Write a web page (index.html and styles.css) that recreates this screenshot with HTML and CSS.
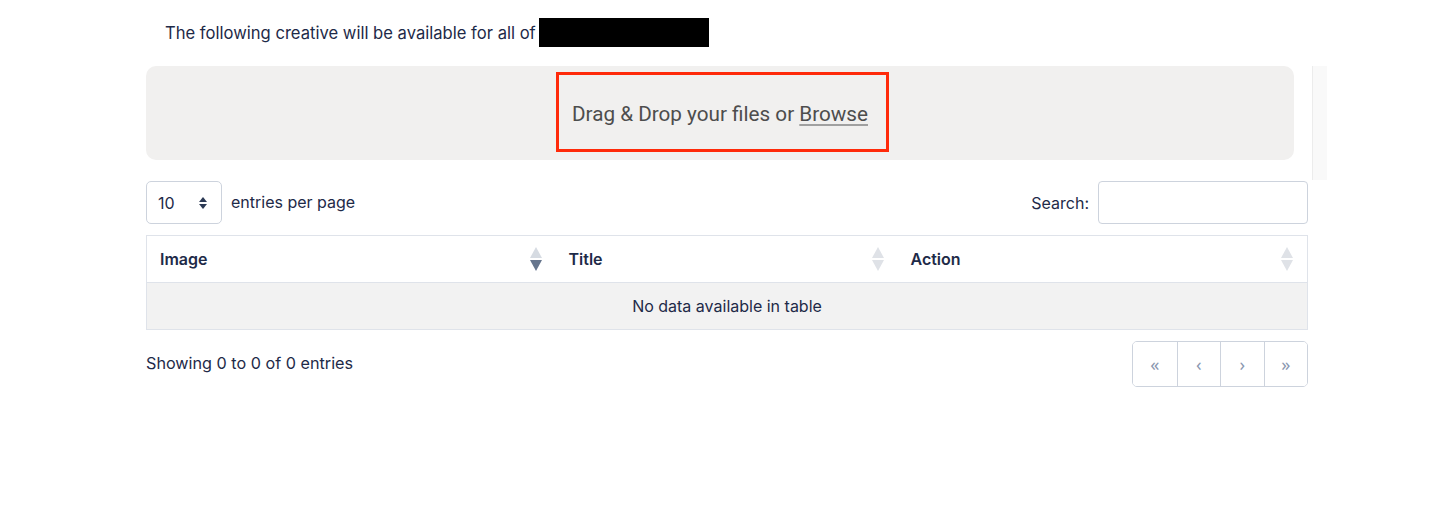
FILE: index.html
```html
<!DOCTYPE html>
<html lang="en">

<head>
    <meta charset="UTF-8">
    <meta name="viewport" content="width=device-width, initial-scale=1.0">
    <title>Creatives</title>
    <link rel="stylesheet" href="styles.css">
</head>

<body>

    <section class="page">
        <p class="intro">The following creative will be available for all of <span class="hidden-name"></span></p>

        <div class="upload">
            <div class="dropzone">
                <span class="drop-text">Drag &amp; Drop your files or <u>Browse</u></span>
                <div class="mark"></div>
            </div>
            <div class="strip"></div>
        </div>

        <div class="controls">
            <div class="perpage">
                <div class="select">
                    <span>10</span>
                    <svg width="10" height="14" viewBox="0 0 10 14">
                        <path d="M5 1 L9 6 H1 Z" fill="#2c3a55" />
                        <path d="M5 13 L9 8 H1 Z" fill="#2c3a55" />
                    </svg>
                </div>
                <span>entries per page</span>
            </div>
            <div class="search">
                <label>Search:</label>
                <input type="text">
            </div>
        </div>

        <table class="datatable">
            <thead>
                <tr>
                    <th class="col-image">Image
                        <svg class="sort" width="12" height="24" viewBox="0 0 12 24">
                            <path d="M6 0 L12 11 H0 Z" fill="#d6dbe2" />
                            <path d="M6 24 L12 13 H0 Z" fill="#66758d" />
                        </svg>
                    </th>
                    <th class="col-title">Title
                        <svg class="sort" width="12" height="24" viewBox="0 0 12 24">
                            <path d="M6 0 L12 11 H0 Z" fill="#dfe2e7" />
                            <path d="M6 24 L12 13 H0 Z" fill="#dfe2e7" />
                        </svg>
                    </th>
                    <th>Action
                        <svg class="sort" width="12" height="24" viewBox="0 0 12 24">
                            <path d="M6 0 L12 11 H0 Z" fill="#dfe2e7" />
                            <path d="M6 24 L12 13 H0 Z" fill="#dfe2e7" />
                        </svg>
                    </th>
                </tr>
            </thead>
            <tbody>
                <tr>
                    <td colspan="3" class="empty">No data available in table</td>
                </tr>
            </tbody>
        </table>

        <div class="footer">
            <span>Showing 0 to 0 of 0 entries</span>
            <div class="pager">
                <button>&laquo;</button>
                <button>&lsaquo;</button>
                <button>&rsaquo;</button>
                <button>&raquo;</button>
            </div>
        </div>
    </section>

</body>

</html>
```

FILE: styles.css
```css
body {
    margin: 0;
    background-color: #fff;
    font-family: Inter, "Noto Sans", sans-serif;
    color: #1e2a48;
}

.page {
    margin-left: 146px;
    width: 1162px;
    padding-top: 18px;
}

.intro {
    margin: 0;
    padding-left: 19px;
    font-size: 16.6px;
    height: 29px;
    display: flex;
    align-items: center;
}

.hidden-name {
    display: inline-block;
    width: 170px;
    height: 29px;
    margin-left: 3px;
    background-color: #000;
}

.upload {
    margin-top: 19px;
    display: flex;
    gap: 18px;
    height: 114px;
}

.dropzone {
    position: relative;
    flex-shrink: 0;
    width: 1148px;
    height: 94px;
    background-color: #f1f0ef;
    border-radius: 10px;
    display: flex;
    justify-content: center;
    align-items: center;
}

.drop-text {
    font-family: Roboto, sans-serif;
    font-size: 20.7px;
    color: #4d4d4d;
    padding-top: 2px;
}

.drop-text u {
    text-decoration-color: #a0a0a0;
    text-underline-offset: 3px;
}

.mark {
    position: absolute;
    left: 410px;
    top: 6px;
    width: 333px;
    height: 80px;
    box-sizing: border-box;
    border: 3px solid #ff2a0a;
}

.strip {
    flex-shrink: 0;
    width: 14px;
    background-color: #f9f9f9;
    border-left: 1px solid #ececec;
}

.controls {
    margin-top: 1px;
    display: flex;
    justify-content: space-between;
    align-items: center;
    width: 1162px;
}

.perpage {
    display: flex;
    align-items: center;
    gap: 9px;
    font-size: 16px;
}

.perpage>span {
    margin-top: -2px;
}

.select {
    width: 76px;
    height: 43px;
    box-sizing: border-box;
    border: 1px solid #cdd3dd;
    border-radius: 5px;
    display: flex;
    align-items: center;
    justify-content: space-between;
    padding: 0 13px 0 11px;
    font-size: 16px;
}

.search {
    display: flex;
    align-items: center;
    gap: 9px;
    font-size: 16px;
}

.search input {
    width: 210px;
    height: 43px;
    box-sizing: border-box;
    border: 1px solid #cdd3dd;
    border-radius: 4px;
    margin: 0;
}

.datatable {
    margin-top: 11px;
    width: 1162px;
    border-collapse: collapse;
    font-size: 16px;
}

.datatable th,
.datatable td {
    border: 1px solid #dfe3ea;
    height: 47px;
    box-sizing: border-box;
}

.datatable th {
    position: relative;
    text-align: left;
    padding: 0 13px;
    font-weight: 600;
    border-left: none;
    border-right: none;
}

.datatable th:first-child {
    border-left: 1px solid #dfe3ea;
}

.datatable th:last-child {
    border-right: 1px solid #dfe3ea;
}

.col-image {
    width: 409px;
}

.col-title {
    width: 342px;
}

.sort {
    position: absolute;
    right: 14px;
    top: 11px;
}

.empty {
    background-color: #f2f2f2;
    text-align: center;
}

.footer {
    margin-top: 11px;
    display: flex;
    justify-content: space-between;
    align-items: center;
    font-size: 16.2px;
}

.footer>span {
    margin-top: -2px;
}

.pager {
    display: flex;
    border: 1px solid #cdd3dd;
    border-radius: 5px;
    overflow: hidden;
}

.pager button {
    width: 43.5px;
    height: 44px;
    border: none;
    border-left: 1px solid #cdd3dd;
    background-color: #fff;
    color: #8a97b0;
    font-size: 18px;
    font-family: "Noto Sans", sans-serif;
    padding: 0;
}

.pager button:first-child {
    border-left: none;
}
```
